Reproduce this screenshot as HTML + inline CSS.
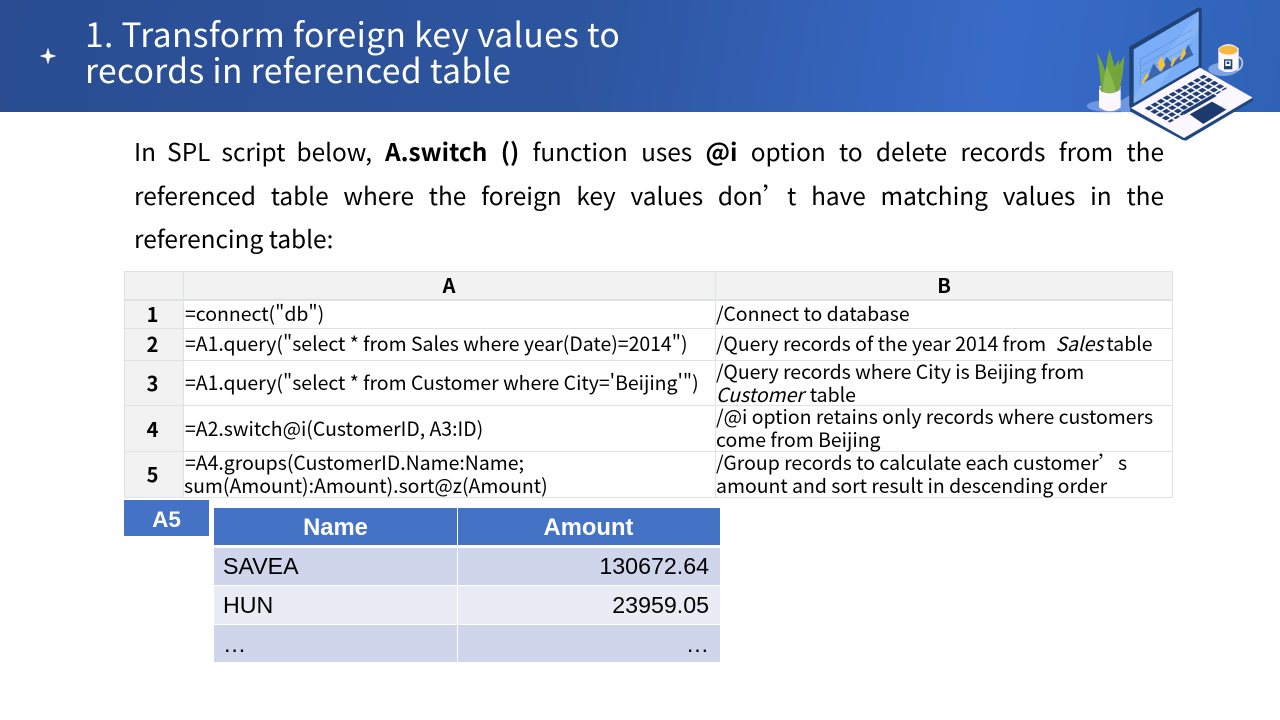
<!DOCTYPE html>
<html lang="zh-CN"><head><meta charset="utf-8"><title>Slide</title>
<style>
html,body{margin:0;padding:0;background:#fff}
#s{position:relative;width:1280px;height:720px;overflow:hidden;background:#fff;font-family:"Noto Sans CJK SC","Liberation Sans",sans-serif;color:#000}
#h{position:absolute;left:0;top:0;width:1280px;height:112px;background:linear-gradient(100deg,#2a4d92 0%,#2d559f 45%,#386bc8 78%,#2f62b6 100%)}
.t{position:absolute;white-space:nowrap;line-height:1}
.ti{color:#fff;font-size:33.5px;left:85px;letter-spacing:.38px}
.b{font-size:24.4px;left:134px}
.j{text-align:justify;text-align-last:justify;white-space:normal}
.c{font-size:19.45px}
.a{left:185px}.m{left:716px}
.n{font-size:20px;font-weight:700;width:57px;left:124px;text-align:center}
.l{position:absolute;background:#dfe3e3}
.r{position:absolute;}
.ar{font-family:"Liberation Sans",sans-serif;font-size:23.2px}
.ah{font-size:23.8px;color:#fff;font-weight:700}
i{font-style:italic}
</style></head><body><div id="s">
<div id="h"></div>
<svg style="position:absolute;left:39px;top:47px" width="18" height="18" viewBox="0 0 18 18"><path d="M9 .5L11 7L17.500 9L11 11L9 17.500L7 11L.5 9L7 7Z" fill="#fff"/></svg>
<div class="t ti" style="top:16px">1. Transform foreign key values to</div>
<div class="t ti" style="top:52px">records in referenced table</div>

<svg style="position:absolute;left:1060px;top:0" width="220" height="150" viewBox="0 0 660 450">
<defs><pattern id="k" patternUnits="userSpaceOnUse" width="1" height="1" patternTransform="matrix(18 -10.500 17 9.800 250 325)"><rect x=".12" y=".12" width=".72" height=".72" fill="#1c3e74"/></pattern></defs>
<ellipse cx="147" cy="318" rx="67" ry="18" fill="#6f96e2"/>
<path d="M90 336Q147 345 200 336Z" fill="#e2e9f8"/>
<ellipse cx="490" cy="208" rx="45" ry="20" fill="#7ea3e4"/>
<path d="M182 302L210 285V336H182Z" fill="#6f96e2"/>
<path d="M200 336H232L340 400Z" fill="#e6edfa"/>
<path d="M117 258L182 258V322Q150 345 117 322Z" fill="#fdf8ff"/>
<path d="M117 258Q150 290 182 258V268Q150 292 117 268Z" fill="#a99fb2"/>
<path d="M124 275C120 230 118 195 110 157C125 180 132 200 137 220C138 195 143 170 148 147C155 170 160 185 163 200L178 178L177 195L193 168C191 210 185 250 176 272Q150 285 124 275Z" fill="#74a53a"/>
<path d="M128 275C130 245 135 215 140 198C152 225 165 250 166 277Q150 282 128 275Z" fill="#8cba4e"/>
<path d="M208 140L415 22L425 25V202L218 328L208 320Z" fill="#1f4377"/>
<path d="M221 148L416 34V197L221 310Z" fill="#79adf8"/>
<path d="M416 34V90L290 270L221 310V290Z" fill="#8ab9fb" opacity=".7"/>
<g stroke="#4b74b5" stroke-width="1.500" opacity=".75"><path d="M241 178L398 88M241 200L398 110M241 222L398 132M241 178V250"/></g>
<path d="M241 252L268 222L280 190L300 215L320 170L337 190L375 155L385 133L400 165L268 240Z" fill="#3a66ad"/>
<path d="M243 250L262 218L267 228L248 252Z M292 190L305 168L316 195L303 216Z M331 197L342 170L348 178L336 200Z M359 178L372 140L378 160L365 180Z" fill="#f6c13e"/>
<path d="M210 325L420 203L581 295L578 303L378 422L368 420L212 335Z" fill="#20477f"/>
<path d="M213 324L420 203L578 293L372 414Z" fill="#fdf8ff"/>
<path d="M250 325L435 222L505 262L330 368Z" fill="url(#k)"/>
<path d="M363 338L460 282L470 288L373 344Z" fill="#1c3e74"/>
<path d="M389 343L456 305L499 329L430 372Z" fill="#1c3a6e"/>
<path d="M475 145Q505 120 536 145V205Q505 228 475 205Z" fill="#fdf8ff"/>
<ellipse cx="505" cy="150" rx="28" ry="14" fill="#f4b942"/>
<path d="M534 170C552 175 552 205 530 212" fill="none" stroke="#cdd0df" stroke-width="5"/>
<rect x="492" y="178" width="25" height="30" fill="#1f4377"/><rect x="496" y="182" width="16" height="16" fill="#fff"/><rect x="500" y="185" width="8" height="7" fill="#1f4377"/>
</svg>

<div class="t b j" style="top:140px;width:238px">In SPL script below,</div>
<div class="t b j" style="top:140px;left:385px;width:779px"><b>A.switch ()</b> function uses <b>@i</b> option to delete records from the</div>
<div class="t b j" style="top:184px;width:1030px">referenced table where the foreign key values don’t have matching values in the</div>
<div class="t b" style="top:227px">referencing table:</div>

<div class="r" style="left:124px;top:271px;width:1049px;height:29px;background:#f2f2f2"></div>
<div class="r" style="left:124px;top:271px;width:60px;height:227px;background:#f2f2f2"></div>
<div class="l" style="left:124px;top:271px;width:1049px;height:1px"></div>
<div class="l" style="left:124px;top:299px;width:1049px;height:2px"></div>
<div class="l" style="left:124px;top:328px;width:1049px;height:1px"></div>
<div class="l" style="left:124px;top:360px;width:1049px;height:1px"></div>
<div class="l" style="left:124px;top:405px;width:1049px;height:1px"></div>
<div class="l" style="left:124px;top:451px;width:1049px;height:1px"></div>
<div class="l" style="left:124px;top:497px;width:1049px;height:1px"></div>
<div class="l" style="left:124px;top:271px;width:1px;height:227px"></div>
<div class="l" style="left:183px;top:271px;width:1px;height:227px"></div>
<div class="l" style="left:715px;top:271px;width:1px;height:227px"></div>
<div class="l" style="left:1172px;top:271px;width:1px;height:227px"></div>

<div class="t" style="left:184px;width:530px;text-align:center;top:275px;font-size:20px;font-weight:700">A</div>
<div class="t" style="left:716px;width:456px;text-align:center;top:275px;font-size:20px;font-weight:700">B</div>
<div class="t n" style="top:304px">1</div>
<div class="t n" style="top:334px">2</div>
<div class="t n" style="top:373px">3</div>
<div class="t n" style="top:419px">4</div>
<div class="t n" style="top:464px">5</div>

<div class="t c a" style="top:303px">=connect("db")</div>
<div class="t c a" style="top:333px">=A1.query("select * from Sales where year(Date)=2014")</div>
<div class="t c a" style="top:372px">=A1.query("select * from Customer where City='Beijing'")</div>
<div class="t c a" style="top:418px">=A2.switch@i(CustomerID, A3:ID)</div>
<div class="t c a" style="top:452px">=A4.groups(CustomerID.Name:Name;</div>
<div class="t c" style="left:184px;top:475px">sum(Amount):Amount).sort@z(Amount)</div>

<div class="t c m" style="top:303px">/Connect to database</div>
<div class="t c m" style="top:333px">/Query records of the year 2014 from <i style="margin-left:5px">Sales</i><span style="margin-left:3px">table</span></div>
<div class="t c m" style="top:361px">/Query records where City is Beijing from</div>
<div class="t c m" style="top:384px"><i>Customer</i><span style="margin-left:6px">table</span></div>
<div class="t c m" style="top:406px">/@i option retains only records where customers</div>
<div class="t c m" style="top:429px">come from Beijing</div>
<div class="t c m" style="top:452px">/Group records to calculate each customer’s</div>
<div class="t c m" style="top:475px">amount and sort result in descending order</div>

<div class="r" style="left:124px;top:500px;width:85px;height:36px;background:#4472c4"></div>
<div class="t ar" style="left:124px;width:85px;text-align:center;top:509px;color:#fff;font-weight:700;font-size:22.5px">A5</div>

<div class="r" style="left:214px;top:508px;width:506px;height:37px;background:#4472c4"></div>
<div class="r" style="left:214px;top:548px;width:506px;height:37px;background:#cfd5ea"></div>
<div class="r" style="left:214px;top:586px;width:506px;height:38px;background:#e9ebf5"></div>
<div class="r" style="left:214px;top:625px;width:506px;height:37px;background:#cfd5ea"></div>
<div class="r" style="left:457px;top:508px;width:1px;height:154px;background:#fff"></div>

<div class="t ar ah" style="left:214px;width:243px;text-align:center;top:516px">Name</div>
<div class="t ar ah" style="left:457px;width:263px;text-align:center;top:516px">Amount</div>
<div class="t ar" style="left:223px;top:555px">SAVEA</div>
<div class="t ar" style="right:571px;top:555px">130672.64</div>
<div class="t ar" style="left:223px;top:594px">HUN</div>
<div class="t ar" style="right:571px;top:594px">23959.05</div>
<div class="t ar" style="left:223px;top:633px">…</div>
<div class="t ar" style="right:571px;top:633px">…</div>
</div></body></html>
